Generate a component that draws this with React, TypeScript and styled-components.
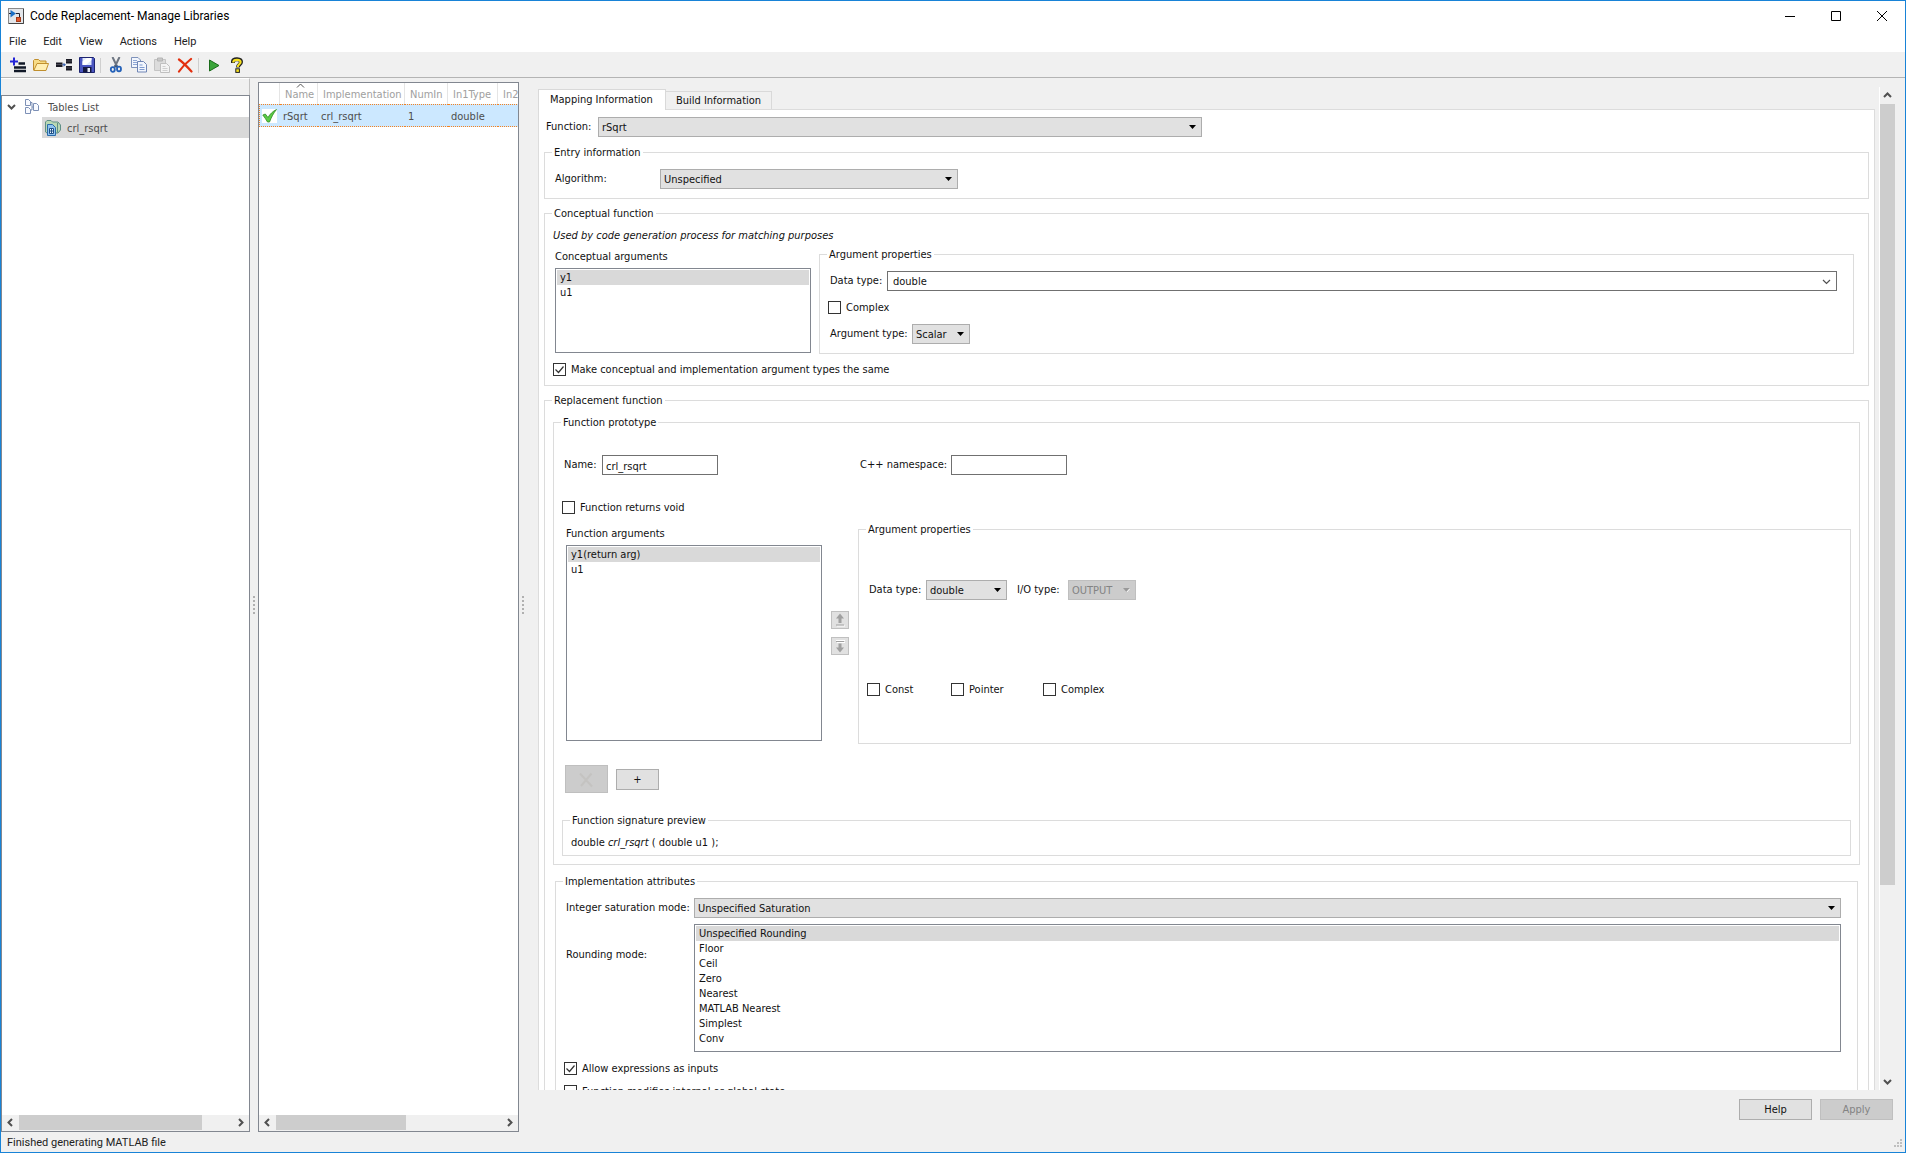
import React from "react";
import styled, { createGlobalStyle, css } from "styled-components";

const FONT = '"DejaVu Sans Condensed", "DejaVu Sans", Tahoma, sans-serif';
const UI_FONT = 'Roboto, "Segoe UI", sans-serif';

const GlobalStyle = createGlobalStyle`
  *, *::before, *::after { box-sizing: border-box; }
  body {
    margin: 0;
    background: #f0f0f0;
    color: #111;
    font: 11px/14px ${FONT};
  }
  button, input, select { font: inherit; color: inherit; margin: 0; border-radius: 0; }
  svg { display: block; }
`;

/* ---------- window frame ---------- */

const Window = styled.div`
  display: flex;
  flex-direction: column;
  height: 100vh;
  border: 1px solid #1883d7;
  overflow: hidden;
`;

const TitleBar = styled.header`
  display: flex;
  align-items: center;
  flex: none;
  height: 30px;
  padding-left: 7px;
  gap: 6px;
  background: #fff;
`;

const Title = styled.h1`
  flex: 1;
  margin: 0;
  font: 12px/16px ${UI_FONT};
  color: #000;
`;

const CaptionButtons = styled.div`
  display: flex;
`;

const CaptionButton = styled.button`
  display: grid;
  place-items: center;
  width: 46px;
  height: 30px;
  padding: 0;
  border: 0;
  background: none;
`;

const MenuBar = styled.nav`
  display: flex;
  align-items: center;
  flex: none;
  gap: 17px;
  height: 22px;
  padding-left: 8px;
  border-bottom: 1px solid #f0f0f0;
  background: #fff;
`;

const MenuItem = styled.button`
  padding: 0;
  border: 0;
  background: none;
  font: 11px/14px ${UI_FONT};
  color: #222;
`;

const Toolbar = styled.div`
  display: flex;
  align-items: center;
  flex: none;
  height: 25px;
  padding-left: 5px;
  border-bottom: 1px solid #b4b4b4;
`;

const ToolButton = styled.button`
  display: grid;
  place-items: center;
  width: 23px;
  height: 22px;
  padding: 0;
  border: 0;
  background: none;
`;

const ToolSeparator = styled.span`
  width: 1px;
  height: 15px;
  margin: 0 3px 0 2px;
  background: #cfcfcf;
`;

const Body = styled.main`
  display: flex;
  flex: 1;
  min-height: 0;
`;

const StatusBar = styled.footer`
  display: flex;
  align-items: center;
  justify-content: space-between;
  flex: none;
  height: 20px;
  padding: 2px 2px 0 6px;
  font: 11px/14px ${UI_FONT};
  color: #222;
`;

/* ---------- left panels ---------- */

const TreeColumn = styled.aside`
  display: flex;
  flex-direction: column;
  flex: none;
  width: 249px;
`;

const TreeCaption = styled.div`
  flex: none;
  height: 17px;
  border-top: 1px solid #fff;
  border-right: 1px solid #c0c0c0;
`;

const Panel = styled.section`
  display: flex;
  flex-direction: column;
  flex: 1;
  min-height: 0;
  border: 1px solid #828790;
  background: #fff;
  color: #4d4d4d;
  overflow: hidden;
`;

const TableColumn = styled.aside`
  display: flex;
  flex-direction: column;
  flex: none;
  width: 261px;
  padding-top: 4px;
`;

const PanelContent = styled.div`
  flex: 1;
  min-height: 0;
  overflow: hidden;
`;

const Splitter = styled.div`
  display: flex;
  flex-direction: column;
  align-items: center;
  justify-content: center;
  flex: none;
  gap: 2px;
  width: 8px;
`;

const SplitterDot = styled.i`
  width: 2px;
  height: 2px;
  background: #b0b0b0;
`;

const TreeRoot = styled.div`
  display: flex;
  align-items: center;
  height: 21px;
  padding-left: 5px;
  gap: 9px;
`;

const TreeText = styled.span`
  padding-top: 2px;
`;

const TreeLeaf = styled.div`
  display: flex;
  align-items: center;
  height: 21px;
  margin-left: 40px;
  padding-left: 3px;
  gap: 6px;
  background: #d9d9d9;
`;

const Grid = styled.table`
  width: 338px;
  table-layout: fixed;
  border-collapse: separate;
  border-spacing: 0;
`;

const HeadCell = styled.th`
  position: relative;
  height: 21px;
  padding: 2px 0 0 5px;
  border-right: 1px solid #e5e5e5;
  text-align: left;
  font-weight: normal;
  color: #a0a0a0;
`;

const SortMark = styled.svg`
  position: absolute;
  top: 0;
  left: 16px;
`;

const Cell = styled.td`
  height: 23px;
  padding: 2px 0 0 3px;
  border: 1px dotted #f58220;
  border-width: 1px 0;
  background: #cce8ff;

  &:first-child { border-left-width: 1px; padding: 0 0 0 2px; }
`;

const CheckTile = styled.span`
  display: block;
  width: 15px;
  height: 14px;
  background: #fff;
`;

/* ---------- scroll bars ---------- */

const ScrollBarBox = styled.div<{ $vertical?: boolean }>`
  display: flex;
  flex: none;
  flex-direction: ${(p) => (p.$vertical ? "column" : "row")};
  ${(p) => (p.$vertical ? "width: 16px; border-left: 1px solid #fff;" : "height: 16px; padding-bottom: 1px;")}
  background: #f0f0f0;
`;

const ScrollArrow = styled.button`
  display: grid;
  place-items: center;
  align-self: center;
  flex: none;
  width: 17px;
  height: 17px;
  padding: 0;
  border: 0;
  background: none;
`;

const Thumb = styled.div<{ $grow: number }>`
  flex: ${(p) => p.$grow} 0 0;
  background: #cdcdcd;
`;

const Track = styled.div<{ $grow: number }>`
  flex: ${(p) => p.$grow} 0 0;
`;

/* ---------- right side ---------- */

const Detail = styled.section`
  display: flex;
  flex-direction: column;
  flex: 1;
  min-width: 0;
  padding: 9px 10px 0 11px;
`;

const ScrollRegion = styled.div`
  display: flex;
  flex: 1;
  min-height: 0;
  gap: 4px;
`;

const Viewport = styled.div`
  flex: 1;
  min-width: 0;
  padding-top: 2px;
  overflow: hidden;
`;

const Tabs = styled.div`
  display: flex;
  align-items: flex-end;
  height: 20px;
`;

const Tab = styled.button<{ $active?: boolean }>`
  padding: 1px 10px 0;
  border: 1px solid #d9d9d9;
  border-bottom: 0;
  background: #f0f0f0;
  height: 18px;
  ${(p) =>
    p.$active
      ? css`
          position: relative;
          height: 21px;
          margin-bottom: -1px;
          padding: 0 12px 0 11px;
          background: #fff;
        `
      : css`
          border-left: 0;
        `}
`;

const Pane = styled.div`
  display: flex;
  flex-direction: column;
  gap: 7px;
  padding: 7px 5px 8px;
  border: 1px solid #dcdcdc;
  background: #fff;
`;

const Group = styled.fieldset<{ $pad: string }>`
  flex: 1;
  min-width: 0;
  margin: 0;
  padding: ${(p) => p.$pad};
  border: 1px solid #dcdcdc;
`;

const Legend = styled.legend`
  height: 14px;
  margin-left: -1px;
  padding: 0 2px;
  line-height: 16px;
`;

const Row = styled.div<{ $gap?: number; $top?: number; $left?: number; $right?: number; $bottom?: number; $align?: string }>`
  display: flex;
  align-items: ${(p) => p.$align ?? "center"};
  gap: ${(p) => p.$gap ?? 0}px;
  margin-top: ${(p) => p.$top ?? 0}px;
  margin-bottom: ${(p) => p.$bottom ?? 0}px;
  padding-left: ${(p) => p.$left ?? 0}px;
  padding-right: ${(p) => p.$right ?? 0}px;
`;

const Label = styled.label<{ $w: number; $top?: number }>`
  flex: none;
  width: ${(p) => p.$w}px;
  padding-top: ${(p) => p.$top ?? 0}px;
  white-space: nowrap;
`;

const ListColumn = styled.div<{ $top: number }>`
  display: flex;
  flex-direction: column;
  flex: none;
  gap: 4px;
  width: 256px;
  padding-top: ${(p) => p.$top}px;

  > select { flex: none; }
`;

const Note = styled.p`
  margin: 0 0 4px;
  font-style: italic;
`;

const SelectWrap = styled.span<{ $w?: number }>`
  display: grid;
  align-items: center;
  ${(p) => (p.$w ? `width: ${p.$w}px; flex: 0 1 auto;` : "flex: 1;")}
  min-width: 0;

  > * { grid-area: 1 / 1; }
  > svg { justify-self: end; margin-right: 6px; pointer-events: none; }
`;

const SelectBox = styled.select<{ $edit?: boolean }>`
  width: 100%;
  height: 20px;
  padding: 2px 16px 0 ${(p) => (p.$edit ? 5 : 3)}px;
  border: 1px solid ${(p) => (p.$edit ? "#707070" : "#adadad")};
  background: ${(p) => (p.$edit ? "#fff" : "#e1e1e1")};
  appearance: none;

  &:disabled {
    border-color: #bfbfbf;
    background: #ccc;
    color: #838383;
    opacity: 1;
  }
`;

const ListBox = styled.select<{ $h: number }>`
  flex: 1;
  width: 100%;
  min-width: 0;
  height: ${(p) => p.$h}px;
  min-height: ${(p) => p.$h}px;
  padding: 1px;
  border: 1px solid #828790;
  background: #fff;
  overflow: hidden;
  outline: none;
  appearance: none;

  option {
    height: 15px;
    min-height: 15px;
    padding: 1px 3px 0;
    line-height: 15px;
    color: #111;
  }
  option:checked {
    background: #d9d9d9 linear-gradient(#d9d9d9, #d9d9d9);
    color: #111;
  }
`;

const TextBox = styled.input`
  width: 116px;
  height: 20px;
  padding: 2px 3px 0;
  border: 1px solid #707070;
  background: #fff;
`;

const CheckLabel = styled.label<{ $w?: number }>`
  display: flex;
  align-items: center;
  gap: 5px;
  height: 13px;
  width: ${(p) => (p.$w ? `${p.$w}px` : "auto")};
  line-height: 16px;
  white-space: nowrap;
`;

const CheckWrap = styled.span`
  display: grid;
  flex: none;

  > * { grid-area: 1 / 1; }
  > svg { visibility: hidden; pointer-events: none; }
  > input:checked + svg { visibility: visible; }
`;

const CheckInput = styled.input`
  width: 13px;
  height: 13px;
  border: 1px solid #333;
  background: #fff;
  appearance: none;
`;

const PushButton = styled.button<{ $w: number; $h?: number }>`
  display: grid;
  place-items: center;
  flex: none;
  width: ${(p) => p.$w}px;
  height: ${(p) => p.$h ?? 21}px;
  padding: 1px 0 0;
  border: 1px solid #adadad;
  background: #e1e1e1;

  &:disabled {
    border-color: #bfbfbf;
    background: #ccc;
    color: #838383;
  }
`;

const MoveButton = styled(PushButton)`
  padding: 0;

  &:disabled { border-color: #c0c0c0; background: #e1e1e1; }
`;

const MoveColumn = styled.div`
  display: flex;
  flex-direction: column;
  align-self: center;
  gap: 8px;
`;

const FooterButtons = styled.div`
  display: flex;
  justify-content: flex-end;
  flex: none;
  gap: 8px;
  padding: 9px 2px 12px;
`;

/* ---------- drawings ---------- */

const AppIcon = () => (
  <svg width="16" height="16" viewBox="0 0 16 16">
    <rect x=".5" y=".5" width="15" height="15" fill="#e3e6ea" stroke="#8a8a8a" />
    <path d="M15.500 1v14.500H1" fill="none" stroke="#444" />
    <path d="M2.500 2v7.500L8 5.500z" fill="#1c6fc4" />
    <path d="M1 5.500h2M8 5.500h3.500V10" fill="none" stroke="#223" />
    <rect x="8.500" y="9.500" width="4" height="4" fill="#e2562b" stroke="#a33a17" />
  </svg>
);

const toolIcons: Record<string, React.ReactNode> = {
  "New table": (
    <>
      <path d="M0 4.500h8M4 .5v8" stroke="#2424d8" strokeWidth="2" />
      <path d="M8.500 6.500H15M4 10.500h12M4 14h12" stroke="#111827" strokeWidth="2.400" />
    </>
  ),
  Open: (
    <>
      <path d="M.5 13V3.500l1-1h4l1.500 1.500H13v2.500" fill="#f7dc86" stroke="#c08f2e" />
      <path d="M.8 13.500L4 6.500h11.500L13 13.500z" fill="#ffefb4" stroke="#c08f2e" />
    </>
  ),
  Link: (
    <>
      <path d="M0 5.500h6.500v4.500H0zM10 2h6v4.500h-6zM10 9h6v4.500h-6z" fill="#1a1a24" />
      <path d="M0 7.500h6.500M10 4h6M10 11h6" stroke="#6a6a76" strokeWidth=".6" />
      <path d="M6.500 7.700h2" stroke="#3b62b0" />
      <path d="M7.500 5.700l2.500 2-2.500 2z" fill="#3b62b0" />
    </>
  ),
  Save: (
    <>
      <path d="M.5.500h14l1 1v14H.5z" fill="#4a55c0" stroke="#1d2470" />
      <path d="M3.500 1h9v7h-9z" fill="#dfe8fb" />
      <path d="M3.500 4.500L8 1h4.500v2L7 8H3.500z" fill="#fff" />
      <path d="M4 10h8.500v5.500H4z" fill="#15183f" />
      <path d="M8.500 11h2.500v4H8.500z" fill="#e8ecf8" />
    </>
  ),
  Cut: (
    <>
      <path d="M4.500 0l5 10.500M11.500 0l-5 10.500" stroke="#6e7682" strokeWidth="2" />
      <path d="M6 8.500h4l-2 2z" fill="#33527f" />
      <ellipse cx="4.800" cy="12.500" rx="2" ry="2.300" fill="none" stroke="#2461b8" strokeWidth="1.800" />
      <ellipse cx="11" cy="12" rx="2" ry="2.300" fill="none" stroke="#2461b8" strokeWidth="1.800" />
    </>
  ),
  Copy: (
    <>
      <path d="M.5.5h6.500l2.500 2.500v7.500h-9z" fill="#f2f6fd" stroke="#7f93bb" />
      <path d="M2 3.500h4M2 5.500h4M2 7.500h4" stroke="#8ea6d4" />
      <path d="M6.500 4.500h6l3 3v7.500h-9z" fill="#f2f6fd" stroke="#7086b5" />
      <path d="M8.500 8h3M8.500 10.500h5M8.500 12.500h5" stroke="#7f9bd0" />
    </>
  ),
  Paste: (
    <>
      <path d="M.5 2.500h11v11H.5z" fill="#dcdcdc" stroke="#c4c4c4" />
      <path d="M3.500 1h5v3h-5z" fill="#c8c8c8" stroke="#b4b4b4" />
      <path d="M6.500 6.500h6l3 3v6h-9z" fill="#f4f4f4" stroke="#c0c0c0" />
      <path d="M8.500 9.500h3M8.500 11.500h5M8.500 13.500h5" stroke="#cfcfcf" />
    </>
  ),
  Delete: (
    <path
      d="M2 2.500c4 3 8.500 7.500 12.500 12M14 2C9.500 5.500 5 10 2 14.500"
      fill="none"
      stroke="#e3300f"
      strokeWidth="2.200"
      strokeLinecap="round"
    />
  ),
  Run: <path d="M3.500 3v11L13 8.500z" fill="#3aa53a" stroke="#1a6b1a" />,
  Help: (
    <>
      <path d="M4 6V4.300C4.500 1.500 12 1.500 12 5c0 2.500-3.200 2.500-3.200 5.500" fill="none" stroke="#222" strokeWidth="4" />
      <path d="M4.400 5.600V4.500C5 2.200 11.600 2.200 11.600 5c0 2.200-2.900 2.400-2.900 5" fill="none" stroke="#f5e020" strokeWidth="2.200" />
      <rect x="6.800" y="11.800" width="3.600" height="3.600" fill="#f5e020" stroke="#222" />
    </>
  ),
};

const ToolIcon = ({ name }: { name: string }) => (
  <svg width="16" height="16" viewBox="0 0 16 16" fill="none">
    {toolIcons[name]}
  </svg>
);

const TablesIcon = () => (
  <svg width="14" height="15" viewBox="0 0 14 15" fill="#f8faff" stroke="#7d90b6">
    <path d="M.5.500h3l2 2v4h-5zM.5 8.500h3l2 2v4h-5zM8.500 4.500h3l2 2v5h-5z" />
    <path d="M5.500 3.500h1.500M5.500 11h1.500v-7.500M7 8h1.500" fill="none" />
  </svg>
);

const LeafIcon = () => (
  <svg width="16" height="16" viewBox="0 0 16 16">
    <path d="M.5 12V2l1.500-1.500h4L7.500 2H13l2.500 3v5L13 13H2z" fill="#b9d9b4" stroke="#5f8f86" />
    <path d="M12.500 3v9.500" stroke="#5f8f86" />
    <path d="M2.500 4.500h5l3 3v8h-8z" fill="#8fc3ee" stroke="#2b6cab" />
    <path d="M4.500 8.500h4v5h-4zM4.500 11h4M6.500 8.500v5" fill="#eef6ff" stroke="#1d4f86" />
  </svg>
);

const CheckIcon = () => (
  <svg width="15" height="14" viewBox="0 0 15 14">
    <path
      d="M.8 6l2.500-1L6 8.500C8 5 10.500 2.500 14.500.5 11.500 4 9.500 8 7.500 13H5.500C4 10.500 2.500 8 .8 6z"
      fill="#5ccc46"
      stroke="#2c8a22"
      strokeWidth=".8"
    />
  </svg>
);

const chevrons = {
  left: "M6 1L2.500 4.500 6 8",
  right: "M3 1l3.500 3.500L3 8",
  up: "M1 6l3.500-3.500L8 6",
  down: "M1 3l3.500 3.500L8 3",
};

const Chevron = ({ dir, thin }: { dir: keyof typeof chevrons; thin?: boolean }) => (
  <svg width="9" height="9" viewBox="0 0 9 9">
    <path d={chevrons[dir]} fill="none" stroke="#505050" strokeWidth={thin ? 1.2 : 2} />
  </svg>
);

const DropArrow = ({ muted }: { muted?: boolean }) => (
  <svg width="7" height="4" viewBox="0 0 7 4">
    <path d="M0 0h7L3.500 4z" fill={muted ? "#999" : "#000"} />
    {muted && <path d="M7 .5L3.800 4" stroke="#fff" />}
  </svg>
);

const MoveIcon = ({ down }: { down?: boolean }) => (
  <svg width="11" height="14" viewBox="0 0 11 14">
    {down ? (
      <>
        <path d="M1 1.500h9M2 3.500h8" stroke="#fff" />
        <path d="M1 2.500h8" stroke="#a0a0a0" />
        <path d="M5 13.500L1 8.500h2.500V4.500h3v4H9z" fill="#a0a0a0" />
      </>
    ) : (
      <>
        <path d="M2 13h8" stroke="#fff" />
        <path d="M5 .5L1 5.500h2.500v4.500h3V5.500H9z" fill="#a0a0a0" />
        <path d="M1 12h8" stroke="#a0a0a0" />
      </>
    )}
  </svg>
);

const Grip = () => (
  <svg width="9" height="9" viewBox="0 0 9 9" fill="#bfbfbf">
    <path d="M6 0h2v2H6zM3 3h2v2H3zM6 3h2v2H6zM0 6h2v2H0zM3 6h2v2H3zM6 6h2v2H6z" />
  </svg>
);

/* ---------- composed controls ---------- */

function Dropdown(props: { id: string; value: string; w?: number; disabled?: boolean; edit?: boolean }) {
  return (
    <SelectWrap $w={props.w}>
      <SelectBox id={props.id} $edit={props.edit} disabled={props.disabled} defaultValue={props.value}>
        <option>{props.value}</option>
      </SelectBox>
      {props.edit ? <Chevron dir="down" thin /> : <DropArrow muted={props.disabled} />}
    </SelectWrap>
  );
}

function List({ id, items, h }: { id: string; items: string[]; h: number }) {
  return (
    <ListBox id={id} $h={h} size={Math.max(items.length, 2)} defaultValue={items[0]}>
      {items.map((item) => (
        <option key={item}>{item}</option>
      ))}
    </ListBox>
  );
}

function Check({ text, checked, w }: { text: string; checked?: boolean; w?: number }) {
  return (
    <CheckLabel $w={w}>
      <CheckWrap>
        <CheckInput type="checkbox" defaultChecked={checked} />
        <svg width="13" height="13" viewBox="0 0 13 13">
          <path d="M2.500 6.500l3 3 5-6" fill="none" stroke="#333" strokeWidth="1.200" />
        </svg>
      </CheckWrap>
      {text}
    </CheckLabel>
  );
}

function ScrollBar({ vertical, thumb, rest }: { vertical?: boolean; thumb: number; rest: number }) {
  return (
    <ScrollBarBox $vertical={vertical}>
      <ScrollArrow aria-label={vertical ? "Scroll up" : "Scroll left"}>
        <Chevron dir={vertical ? "up" : "left"} />
      </ScrollArrow>
      <Thumb $grow={thumb} />
      <Track $grow={rest} />
      <ScrollArrow aria-label={vertical ? "Scroll down" : "Scroll right"}>
        <Chevron dir={vertical ? "down" : "right"} />
      </ScrollArrow>
    </ScrollBarBox>
  );
}

function SplitHandle() {
  return (
    <Splitter>
      {[0, 1, 2, 3, 4].map((n) => (
        <SplitterDot key={n} />
      ))}
    </Splitter>
  );
}

const toolGroups = [["New table", "Open", "Link", "Save"], ["Cut", "Copy", "Paste", "Delete"], ["Run", "Help"]];
const roundingModes = ["Unspecified Rounding", "Floor", "Ceil", "Zero", "Nearest", "MATLAB Nearest", "Simplest", "Conv"];

function LibraryTree() {
  return (
    <TreeColumn>
      <TreeCaption />
      <Panel>
        <PanelContent>
          <TreeRoot>
            <Chevron dir="down" />
            <TablesIcon />
            <TreeText>Tables List</TreeText>
          </TreeRoot>
          <TreeLeaf>
            <LeafIcon />
            <TreeText>crl_rsqrt</TreeText>
          </TreeLeaf>
        </PanelContent>
        <ScrollBar thumb={183} rest={30} />
      </Panel>
    </TreeColumn>
  );
}

function EntryTable() {
  return (
    <TableColumn>
      <Panel>
        <PanelContent>
          <Grid>
            <colgroup>
              <col width="21" />
              <col width="38" />
              <col width="87" />
              <col width="43" />
              <col width="50" />
              <col />
            </colgroup>
            <thead>
              <tr>
                <HeadCell />
                <HeadCell>
                  <SortMark width="9" height="5" viewBox="0 0 9 5">
                    <path d="M1 4.500L4.500 1 8 4.500" fill="none" stroke="#555" />
                  </SortMark>
                  Name
                </HeadCell>
                <HeadCell>Implementation</HeadCell>
                <HeadCell>NumIn</HeadCell>
                <HeadCell>In1Type</HeadCell>
                <HeadCell>In2Type</HeadCell>
              </tr>
            </thead>
            <tbody>
              <tr>
                <Cell>
                  <CheckTile>
                    <CheckIcon />
                  </CheckTile>
                </Cell>
                <Cell>rSqrt</Cell>
                <Cell>crl_rsqrt</Cell>
                <Cell>1</Cell>
                <Cell>double</Cell>
                <Cell />
              </tr>
            </tbody>
          </Grid>
        </PanelContent>
        <ScrollBar thumb={130} rest={95} />
      </Panel>
    </TableColumn>
  );
}

function ConceptualFunction() {
  return (
    <Group $pad="9px 14px 9px 8px">
      <Legend>Conceptual function</Legend>
      <Note>Used by code generation process for matching purposes</Note>
      <Row $gap={8} $left={2} $align="stretch">
        <ListColumn $top={3}>
          <label htmlFor="conceptual-args">Conceptual arguments</label>
          <List id="conceptual-args" items={["y1", "u1"]} h={85} />
        </ListColumn>
        <Group $pad="10px 16px 9px 8px">
          <Legend>Argument properties</Legend>
          <Row $left={2}>
            <Label $w={57} htmlFor="c-data-type">Data type:</Label>
            <Dropdown id="c-data-type" value="double" edit />
          </Row>
          <Row $top={10}>
            <Check text="Complex" />
          </Row>
          <Row $top={10} $left={2}>
            <Label $w={82} htmlFor="c-arg-type">Argument type:</Label>
            <Dropdown id="c-arg-type" value="Scalar" w={58} />
          </Row>
        </Group>
      </Row>
      <Row $top={9}>
        <Check text="Make conceptual and implementation argument types the same" checked />
      </Row>
    </Group>
  );
}

function FunctionPrototype() {
  return (
    <Group $pad="26px 8px 8px 8px">
      <Legend>Function prototype</Legend>
      <Row $left={2} $gap={142}>
        <Row>
          <Label $w={38} htmlFor="fn-name">Name:</Label>
          <TextBox id="fn-name" defaultValue="crl_rsqrt" />
        </Row>
        <Row>
          <Label $w={91} htmlFor="fn-namespace">C++ namespace:</Label>
          <TextBox id="fn-namespace" />
        </Row>
      </Row>
      <Row $top={26}>
        <Check text="Function returns void" />
      </Row>
      <Row $top={8} $left={4} $gap={9} $align="stretch">
        <ListColumn $top={5}>
          <label htmlFor="fn-args">Function arguments</label>
          <List id="fn-args" items={["y1(return arg)", "u1"]} h={196} />
        </ListColumn>
        <MoveColumn>
          <MoveButton $w={18} $h={18} disabled aria-label="Move up"><MoveIcon /></MoveButton>
          <MoveButton $w={18} $h={18} disabled aria-label="Move down"><MoveIcon down /></MoveButton>
        </MoveColumn>
        <Group $pad="44px 8px 47px 8px">
          <Legend>Argument properties</Legend>
          <Row $left={2} $gap={10}>
            <Row>
              <Label $w={57} htmlFor="f-data-type">Data type:</Label>
              <Dropdown id="f-data-type" value="double" w={81} />
            </Row>
            <Row>
              <Label $w={51} htmlFor="f-io-type">I/O type:</Label>
              <Dropdown id="f-io-type" value="OUTPUT" w={68} disabled />
            </Row>
          </Row>
          <Row $top={83}>
            <Check text="Const" w={84} />
            <Check text="Pointer" w={92} />
            <Check text="Complex" />
          </Row>
        </Group>
      </Row>
      <Row $top={21} $left={3} $gap={8}>
        <PushButton $w={43} $h={28} disabled aria-label="Remove argument">
          <svg width="15" height="16" viewBox="0 0 15 16">
            <path d="M1 1.500l12 13M12.500 1.500L2 14" fill="none" stroke="#c4c3c1" strokeWidth="2" />
          </svg>
        </PushButton>
        <PushButton $w={43}>+</PushButton>
      </Row>
      <Row $top={20}>
        <Group $pad="9px 8px 5px">
          <Legend>Function signature preview</Legend>
          double <i>crl_rsqrt</i> ( double u1 );
        </Group>
      </Row>
    </Group>
  );
}

function ImplementationAttributes() {
  return (
    <Group $pad="10px 16px 9px 8px">
      <Legend>Implementation attributes</Legend>
      <Row $left={2}>
        <Label $w={128} htmlFor="saturation">Integer saturation mode:</Label>
        <Dropdown id="saturation" value="Unspecified Saturation" />
      </Row>
      <Row $top={6} $left={2} $align="flex-start">
        <Label $w={128} $top={24} htmlFor="rounding">Rounding mode:</Label>
        <List id="rounding" items={roundingModes} h={128} />
      </Row>
      <Row $top={10}>
        <Check text="Allow expressions as inputs" checked />
      </Row>
      <Row $top={10}>
        <Check text="Function modifies internal or global state" />
      </Row>
    </Group>
  );
}

export default function App() {
  return (
    <Window>
      <GlobalStyle />
      <TitleBar>
        <AppIcon />
        <Title>Code Replacement- Manage Libraries</Title>
        <CaptionButtons>
          <CaptionButton aria-label="Minimize">
            <svg width="10" height="11" viewBox="0 0 10 11"><path d="M0 5.500h10" stroke="#000" /></svg>
          </CaptionButton>
          <CaptionButton aria-label="Maximize">
            <svg width="10" height="10" viewBox="0 0 10 10"><path d="M.5.500h9v9h-9z" fill="none" stroke="#000" /></svg>
          </CaptionButton>
          <CaptionButton aria-label="Close">
            <svg width="10" height="10" viewBox="0 0 10 10"><path d="M0 0l10 10M10 0L0 10" stroke="#000" /></svg>
          </CaptionButton>
        </CaptionButtons>
      </TitleBar>
      <MenuBar>
        {["File", "Edit", "View", "Actions", "Help"].map((name) => (
          <MenuItem key={name}>{name}</MenuItem>
        ))}
      </MenuBar>
      <Toolbar>
        {toolGroups.map((group, i) => (
          <React.Fragment key={group[0]}>
            {i > 0 && <ToolSeparator />}
            {group.map((name) => (
              <ToolButton key={name} aria-label={name}>
                <ToolIcon name={name} />
              </ToolButton>
            ))}
          </React.Fragment>
        ))}
      </Toolbar>
      <Body>
        <LibraryTree />
        <SplitHandle />
        <EntryTable />
        <SplitHandle />
        <Detail>
          <ScrollRegion>
            <Viewport>
              <Tabs>
                <Tab $active>Mapping Information</Tab>
                <Tab>Build Information</Tab>
              </Tabs>
              <Pane>
                <Row $left={2} $bottom={1}>
                  <Label $w={52} htmlFor="fn">Function:</Label>
                  <Dropdown id="fn" value="rSqrt" w={604} />
                </Row>
                <Group $pad="10px 8px 9px">
                  <Legend>Entry information</Legend>
                  <Row $left={2}>
                    <Label $w={105} htmlFor="algorithm">Algorithm:</Label>
                    <Dropdown id="algorithm" value="Unspecified" w={298} />
                  </Row>
                </Group>
                <ConceptualFunction />
                <Group $pad="8px">
                  <Legend>Replacement function</Legend>
                  <Row>
                    <FunctionPrototype />
                  </Row>
                  <Row $top={9} $left={2} $right={2}>
                    <ImplementationAttributes />
                  </Row>
                </Group>
              </Pane>
            </Viewport>
            <ScrollBar vertical thumb={781} rest={188} />
          </ScrollRegion>
          <FooterButtons>
            <PushButton $w={73}>Help</PushButton>
            <PushButton $w={73} disabled>Apply</PushButton>
          </FooterButtons>
        </Detail>
      </Body>
      <StatusBar>
        Finished generating MATLAB file
        <Grip />
      </StatusBar>
    </Window>
  );
}
